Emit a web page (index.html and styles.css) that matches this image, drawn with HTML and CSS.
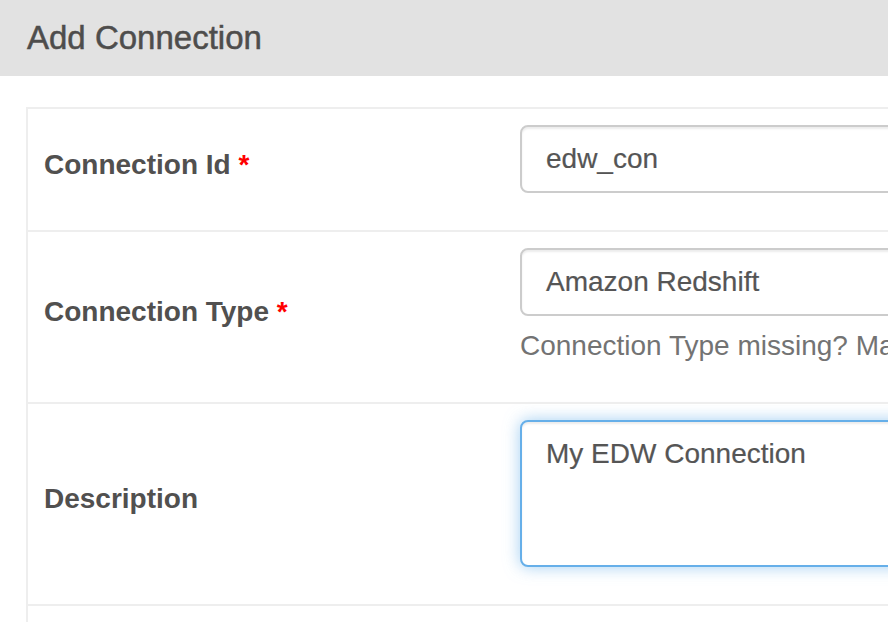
FILE: index.html
```html
<!DOCTYPE html>
<html lang="en">
<head>
<meta charset="utf-8">
<title>Add Connection</title>
<link rel="stylesheet" href="styles.css">
</head>
<body>
<div class="panel-heading">
  <h4 class="panel-title">Add Connection</h4>
</div>
<div class="panel-body">
  <table class="form-table">
    <tr>
      <td class="col-label"><label>Connection Id <strong class="req">*</strong></label></td>
      <td class="col-field">
        <div class="form-control">edw_con</div>
        <div class="help-empty"></div>
      </td>
    </tr>
    <tr>
      <td class="col-label"><label>Connection Type <strong class="req">*</strong></label></td>
      <td class="col-field">
        <div class="form-control">Amazon Redshift</div>
        <p class="help-block">Connection Type missing? Make sure you've installed the corresponding Airflow Provider Package.</p>
      </td>
    </tr>
    <tr>
      <td class="col-label"><label>Description</label></td>
      <td class="col-field">
        <div class="form-control textarea focus">My EDW Connection</div>
        <div class="help-empty"></div>
      </td>
    </tr>
    <tr>
      <td class="col-label"></td>
      <td class="col-field">
        <div class="form-control"></div>
        <div class="help-empty"></div>
      </td>
    </tr>
  </table>
</div>
</body>
</html>
```

FILE: styles.css
```css
html, body {
  margin: 0;
  padding: 0;
  overflow: hidden;
  background: #ffffff;
}

body {
  font-family: "Liberation Sans", Arial, Helvetica, sans-serif;
  font-size: 28px;
  line-height: 40px;
  color: #51504f;
}

.panel-heading {
  background: #e2e2e2;
  height: 76px;
  padding-left: 27px;
}

.panel-title {
  margin: 0;
  font-size: 33px;
  font-weight: normal;
  line-height: 76px;
  color: #4e4d4c;
  white-space: nowrap;
  -webkit-text-stroke: 0.5px #4e4d4c;
}

.panel-body {
  padding: 31px 0 0 26px;
}

.form-table {
  border-collapse: collapse;
  border-left: 2px solid #eeeeee;
  width: 1800px;
  table-layout: fixed;
}

.form-table tr {
  border-top: 2px solid #eeeeee;
}

.form-table td {
  padding: 16px;
  vertical-align: middle;
}

.col-label {
  width: 444px;
}

.col-label label {
  display: inline-block;
  font-weight: bold;
  margin-bottom: 10px;
  white-space: nowrap;
}

.req {
  color: #ff0000;
  font-weight: bold;
}

.form-control {
  box-sizing: border-box;
  height: 68px;
  padding: 12px 24px;
  border: 2px solid #cccccc;
  border-radius: 8px;
  background: #ffffff;
  color: #555555;
  font-size: 28px;
  line-height: 40px;
  box-shadow: inset 0 2px 2px rgba(0, 0, 0, 0.075);
  white-space: nowrap;
  -webkit-text-stroke: 0.2px #555555;
}

.form-control.textarea {
  height: 147px;
}

.form-control.focus {
  border-color: #66afe9;
  box-shadow: inset 0 2px 2px rgba(0, 0, 0, 0.075), 0 0 16px rgba(102, 175, 233, 0.6);
}

.help-empty {
  height: 21px;
}

.help-block {
  margin: 10px 0 20px;
  color: #737373;
  white-space: nowrap;
}
```
